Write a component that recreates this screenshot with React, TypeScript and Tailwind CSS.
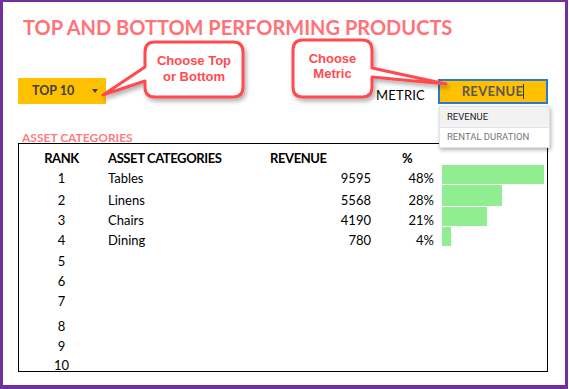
import React from "react";

type Row = { rank: number; name?: string; revenue?: number; pct?: number; h: string };

const rows: Row[] = [
  { rank: 1, name: "Tables", revenue: 9595, pct: 48, h: "h-[20px]" },
  { rank: 2, name: "Linens", revenue: 5568, pct: 28, h: "h-[22px]" },
  { rank: 3, name: "Chairs", revenue: 4190, pct: 21, h: "h-[20px]" },
  { rank: 4, name: "Dining", revenue: 780, pct: 4, h: "h-[20px]" },
  { rank: 5, h: "h-[21px]" },
  { rank: 6, h: "h-[20px]" },
  { rank: 7, h: "h-[20px]" },
  { rank: 8, h: "h-[25px]" },
  { rank: 9, h: "h-[20px]" },
  { rank: 10, h: "h-[19px]" },
];

function Callouts() {
  return (
    <div className="absolute -left-[3px] -top-[2px] w-[569px] h-[389px] pointer-events-none">
      <svg width="569" height="389" className="absolute left-0 top-0">
        <defs>
          <filter id="sh" x="-20%" y="-20%" width="140%" height="150%">
            <feDropShadow dx="2" dy="3" stdDeviation="2" floodColor="#000" floodOpacity="0.3" />
          </filter>
        </defs>
        <path
          d="M155 42 H233 Q243 42 243 52 V87 Q243 97 233 97 H155 Q145 97 145 87 V81 L103 95 L145 67 V52 Q145 42 155 42 Z"
          fill="#fff"
          stroke="#FF4B4F"
          strokeWidth="3"
          strokeLinejoin="round"
          filter="url(#sh)"
        />
        <path
          d="M303 40 H362 Q372 40 372 50 V68 L446 84 L372 77 V87 Q372 97 362 97 H303 Q293 97 293 87 V50 Q293 40 303 40 Z"
          fill="#fff"
          stroke="#FF4B4F"
          strokeWidth="3"
          strokeLinejoin="round"
          filter="url(#sh)"
        />
      </svg>
      <div className="absolute left-[145px] top-[53px] w-[98px] text-center font-['Liberation_Sans',sans-serif] font-bold text-[13px] leading-[16px] text-[#FF4B4F]">
        Choose Top
        <br />
        or Bottom
      </div>
      <div className="absolute left-[293px] top-[51px] w-[79px] text-center font-['Liberation_Sans',sans-serif] font-bold text-[13px] leading-[15px] text-[#FF4B4F]">
        Choose
        <br />
        Metric
      </div>
    </div>
  );
}

export default function App() {
  return (
    <div className="relative w-[568px] h-[389px] bg-white border-l-[3px] border-t-2 border-r-[3px] border-b-[4px] border-[#7030A0] font-['Lato',sans-serif] text-black">
      <div className="ml-[15px] w-[530px]">
        <h1 className="pl-[5px] mt-[13px] text-[20px] leading-[24px] font-bold text-[#FF7378] whitespace-nowrap">
          TOP AND BOTTOM PERFORMING PRODUCTS
        </h1>

        {/* controls */}
        <div className="mt-[39px] h-[26px] flex items-end">
          <div className="w-[88px] h-[26px] bg-[#FFC000] flex items-center pl-[14px] pr-[8px]">
            <span className="text-[12.5px] font-bold text-[#404040]">TOP 10</span>
            <span className="ml-auto w-0 h-0 border-l-[3px] border-r-[3px] border-t-[4px] border-l-transparent border-r-transparent border-t-[#404040]" />
          </div>
          <div className="ml-auto mr-[13px] text-[13px] leading-[16px] mb-[1px] tracking-[0.2px]">METRIC</div>
          <div className="relative w-[110px] h-[25px]">
            <div className="w-full h-full bg-[#FFC000] border-2 border-[#2A78DA] flex items-center justify-center">
              <span className="text-[13px] font-bold text-[#595959] tracking-[0.3px]">REVENUE</span>
              <span className="w-px h-[15px] bg-[#333]" />
            </div>
            <div className="absolute left-[1px] top-[27px] w-[111px] bg-white shadow-[1px_2px_4px_rgba(0,0,0,0.3)] border border-[#e3e3e3] font-['Roboto',sans-serif] text-[9.5px] z-10">
              <div className="h-[21px] flex items-center pl-[7px] bg-[#f2f2f2] text-[#222] border-b border-[#e3e3e3]">REVENUE</div>
              <div className="h-[19px] flex items-center pl-[7px] text-[#777]">RENTAL DURATION</div>
            </div>
          </div>
        </div>

        <div className="mt-[28px] pl-[4px] text-[12px] leading-[11px] font-bold text-[#FF7C80]">ASSET CATEGORIES</div>

        {/* table */}
        <div className="border border-black">
          <div className="h-[20px] flex items-end text-[13px] leading-[12px] font-bold tracking-[-0.4px]">
            <div className="w-[85px] text-center">RANK</div>
            <div className="w-[158px] pl-[4px]">ASSET CATEGORIES</div>
            <div className="w-[110px] pl-[8px]">REVENUE</div>
            <div className="w-[63px] pl-[30px]">%</div>
          </div>
          {rows.map((r) => (
            <div key={r.rank} className={`${r.h} flex items-end text-[13px] leading-[12px]`}>
              <div className="w-[85px] text-center">{r.rank}</div>
              <div className="w-[158px] pl-[4px]">{r.name ?? ""}</div>
              <div className="w-[110px] text-right pr-px">{r.revenue ?? ""}</div>
              <div className="w-[63px] text-right pr-px">{r.pct !== undefined ? `${r.pct}%` : ""}</div>
              <div className="pl-[7px] self-stretch pt-px">
                {r.pct !== undefined && (
                  <div className="h-full bg-[#90EE90]" style={{ width: `${r.pct * 2.125}px` }} />
                )}
              </div>
            </div>
          ))}
        </div>
      </div>

      <Callouts />
    </div>
  );
}
